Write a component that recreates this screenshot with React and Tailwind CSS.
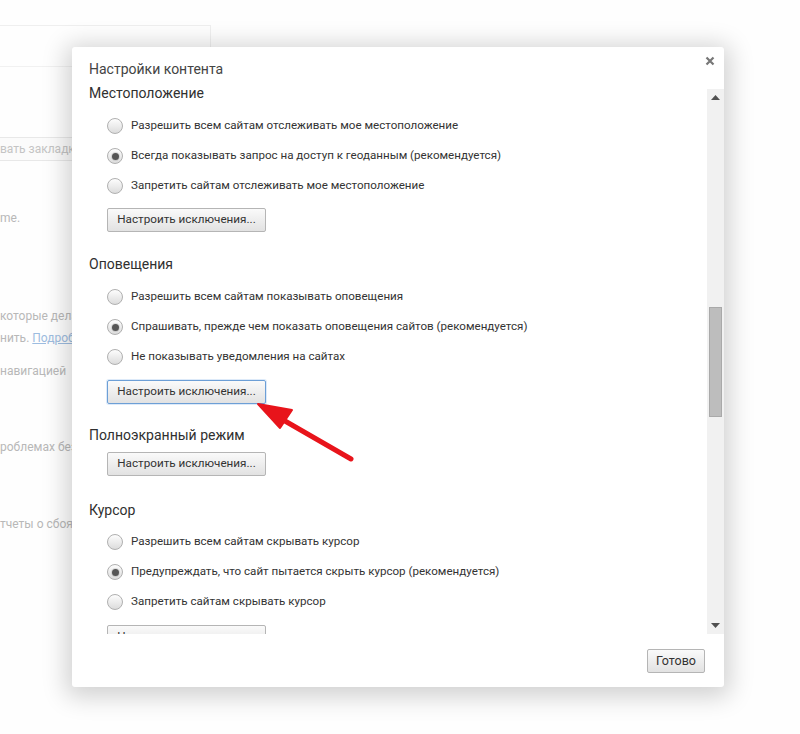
import React from 'react'

const font = { fontFamily: 'Roboto, "Open Sans", "Noto Sans", sans-serif' }

const Radio = ({ checked, label }) => (
  <div className="flex h-[30px] items-center pl-[35px]">
    <span className="flex h-[16px] w-[16px] shrink-0 items-center justify-center rounded-full border border-[#b0b0b0] bg-gradient-to-b from-[#fdfdfd] to-[#dcdcdc]">
      {checked && <span className="h-[7px] w-[7px] rounded-full bg-[#555] shadow-[0_0_0_1px_rgba(0,0,0,0.1)]" />}
    </span>
    <span className="ml-[8px] whitespace-nowrap text-[11.6px] text-[#333]">{label}</span>
  </div>
)

const Btn = ({ children, focused, className = '' }) => (
  <button
    className={
      'flex h-[24px] items-center justify-center rounded-[2px] border bg-gradient-to-b from-[#fafafa] to-[#e2e2e2] text-[11.7px] text-[#333] ' +
      (focused ? 'border-[#6d9fd6] shadow-[0_0_0_1px_rgba(120,170,230,0.25)] ' : 'border-[#b5b5b5] ') +
      className
    }
    style={font}
  >
    {children}
  </button>
)

const Heading = ({ children, className = '' }) => (
  <div className={'h-[18px] pl-[17px] text-[14px] leading-[18px] text-[#303030] ' + className}>{children}</div>
)

export default function App() {
  return (
    <div className="relative h-[734px] w-[800px] overflow-hidden bg-[#fefefe]" style={font}>
      {/* page behind the dialog */}
      <div className="flex flex-col text-[12px] text-[#b8b8b8]">
        <div className="mt-[25px] h-[60px] w-[211px] border-r border-t border-[#efefef]">
          <div className="mt-[40px] border-t border-[#f1f1f1]" />
        </div>
        <div className="flex w-[72px] flex-col overflow-hidden">
          <div className="mt-[52px] flex h-[24px] w-[72px] items-center overflow-hidden border-y border-[#e8e8e8] bg-[#fbfbfb] text-[#c4c4c4]">
            <span className="whitespace-nowrap">вать закладк</span>
          </div>
          <div className="mt-[48px] h-[18px] whitespace-nowrap">me.</div>
          <div className="mt-[80px] h-[22px] whitespace-nowrap">которые дела</div>
          <div className="h-[22px] whitespace-nowrap">
            нить. <span className="text-[#9dbce0] underline">Подроб</span>
          </div>
          <div className="mt-[11px] h-[22px] whitespace-nowrap">навигацией</div>
          <div className="mt-[54px] h-[22px] whitespace-nowrap">роблемах без</div>
          <div className="mt-[55px] h-[22px] whitespace-nowrap">тчеты о сбоя</div>
        </div>
      </div>

      {/* dialog */}
      <div className="absolute left-[72px] top-[47px] flex h-[640px] w-[652px] flex-col rounded-[3px] bg-white shadow-[0_4px_24px_6px_rgba(0,0,0,0.18)]">
        <div className="flex h-[37px] items-start justify-between">
          <div className="pl-[17px] pt-[13px] text-[14px] leading-[18px] text-[#444]">Настройки контента</div>
          <svg width="10" height="10" viewBox="0 0 10 10" className="mr-[9px] mt-[9px]">
            <path d="M1.5 1.5 L8.5 8.5 M8.5 1.5 L1.5 8.5" stroke="#777" strokeWidth="2.2" />
          </svg>
        </div>

        <div className="flex h-[550px]">
          <div className="flex flex-1 flex-col overflow-hidden">
            <Heading>Местоположение</Heading>
            <div className="mt-[9px]">
              <Radio label="Разрешить всем сайтам отслеживать мое местоположение" />
              <Radio checked label="Всегда показывать запрос на доступ к геоданным (рекомендуется)" />
              <Radio label="Запретить сайтам отслеживать мое местоположение" />
            </div>
            <Btn className="ml-[35px] mt-[7px] w-[159px] shrink-0">Настроить исключения...</Btn>

            <Heading className="mt-[23px]">Оповещения</Heading>
            <div className="mt-[9px]">
              <Radio label="Разрешить всем сайтам показывать оповещения" />
              <Radio checked label="Спрашивать, прежде чем показать оповещения сайтов (рекомендуется)" />
              <Radio label="Не показывать уведомления на сайтах" />
            </div>
            <Btn focused className="ml-[35px] mt-[8px] w-[159px] shrink-0">Настроить исключения...</Btn>

            <Heading className="mt-[22px]">Полноэкранный режим</Heading>
            <Btn className="ml-[35px] mt-[8px] w-[159px] shrink-0">Настроить исключения...</Btn>

            <Heading className="mt-[25px]">Курсор</Heading>
            <div className="mt-[8px]">
              <Radio label="Разрешить всем сайтам скрывать курсор" />
              <Radio checked label="Предупреждать, что сайт пытается скрыть курсор (рекомендуется)" />
              <Radio label="Запретить сайтам скрывать курсор" />
            </div>
            <Btn className="ml-[35px] mt-[8px] w-[159px] shrink-0">Настроить исключения...</Btn>
          </div>

          <div className="mt-[5px] flex w-[17px] flex-col items-center bg-[#f1f1f1]">
            <svg width="9" height="5" viewBox="0 0 9 5" className="mt-[6px]">
              <path d="M0 5 L4.5 0 L9 5 Z" fill="#505050" />
            </svg>
            <div className="mt-[207px] h-[110px] w-[13px] border border-[#a9a9a9] bg-[#bdbdbd]" />
            <div className="flex-1" />
            <svg width="9" height="5" viewBox="0 0 9 5" className="mb-[6px]">
              <path d="M0 0 L9 0 L4.5 5 Z" fill="#505050" />
            </svg>
          </div>
        </div>

        <div className="flex flex-1 justify-end pr-[19px] pt-[15px]">
          <Btn className="h-[23px] w-[58px] border-[#8c8c8c] text-[12.5px]">Готово</Btn>
        </div>
      </div>

      {/* red arrow annotation */}
      <svg className="pointer-events-none absolute left-0 top-0" width="800" height="734">
        <path d="M351 459 L285 421" stroke="#e8141b" strokeWidth="5" strokeLinecap="round" />
        <path d="M258 404 L292 410 L280 428 Z" fill="#e8141b" stroke="#e8141b" strokeWidth="2" strokeLinejoin="round" />
      </svg>
    </div>
  )
}
